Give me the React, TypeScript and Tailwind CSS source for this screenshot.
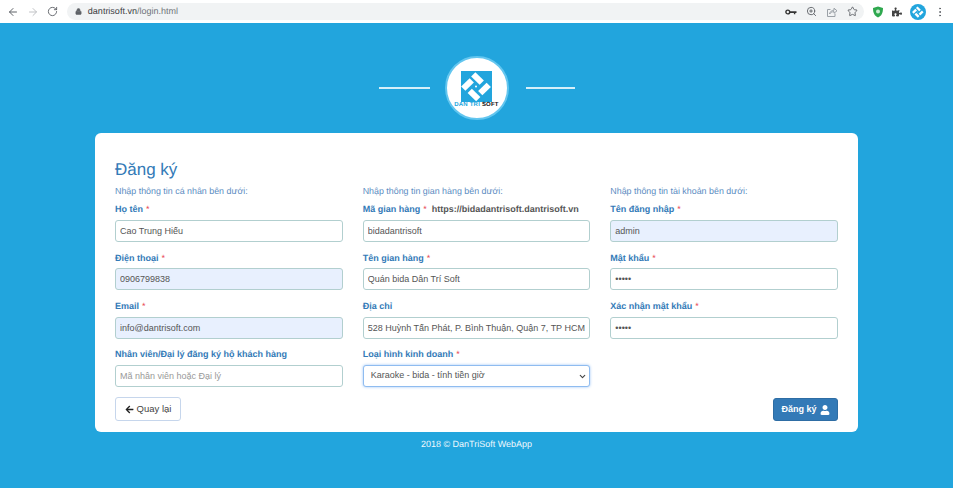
import {
  ArrowLeft,
  ArrowRight,
  ChevronDown,
  EllipsisVertical,
  Lock,
  RotateCw,
  Star,
  ZoomIn,
} from "lucide-react";
import { FaArrowLeft, FaPuzzlePiece, FaUser } from "react-icons/fa";

interface FieldProps {
  label: string;
  required?: boolean;
  value?: string;
  placeholder?: string;
  filled?: boolean;
  type?: string;
  extra?: string;
}

const Pinwheel = ({ size, fill }: { size: number; fill: string }) => (
  <svg width={size} height={size} viewBox="0 0 31 31" className="block">
    <rect x="10.5" y="4.5" width="12" height="6" transform="rotate(45 16.5 7.5)" fill={fill} />
    <rect x="17.5" y="15" width="12" height="6" transform="rotate(-45 23.5 18)" fill={fill} />
    <rect x="7" y="21" width="12" height="6" transform="rotate(45 13 24)" fill={fill} />
    <rect x="0.5" y="10.5" width="12" height="6" transform="rotate(-45 6.5 13.5)" fill={fill} />
    <circle cx="15" cy="15.5" r="1" fill={fill} />
  </svg>
);

const KeyIcon = () => (
  <svg width="12" height="8" viewBox="0 0 12 8" fill="none">
    <circle cx="2.8" cy="4" r="1.9" stroke="#333333" strokeWidth="1.4" />
    <path d="M4.5 3.2H11.5V5H10.3V6.2H8.9V5H4.5Z" fill="#333333" />
  </svg>
);

const ShareIcon = () => (
  <svg width="12" height="12" viewBox="0 0 12 12" fill="none" stroke="#9aa0a6" strokeWidth="1">
    <path d="M4.5 3.5H1.5V10.5H9V7.5" />
    <path d="M3.5 8C4 5.5 6 4.2 8 4.2V2.2L11 4.8L8 7.2V5.6C6.2 5.6 4.8 6.4 3.5 8Z" />
  </svg>
);

const Field = ({ label, required, value, placeholder, filled, type, extra }: FieldProps) => (
  <div className="mb-[9.33px]">
    <label className="mb-[3px] flex h-[14px] items-center whitespace-nowrap text-[9px] font-bold text-[#337ab7]">
      {label}
      {required && <span className="ml-[3px] font-normal text-[#e8424f]">*</span>}
      {extra && <span className="ml-[5px] text-[#555555]">{extra}</span>}
    </label>
    <input
      type={type || "text"}
      defaultValue={value}
      placeholder={placeholder}
      className={`block h-[22px] w-full rounded-[3px] border border-[#b2cfcf] px-[4px] text-[9px] text-[#555555] placeholder:text-[#999999] outline-none ${
        filled ? "bg-[#e8f0fe]" : "bg-white"
      }`}
    />
  </div>
);

const Subtitle = ({ children }: { children: string }) => (
  <p className="mb-[4px] mt-[1px] flex h-[14px] items-center text-[8.9px] text-[#5b8cc2]">
    {children}
  </p>
);

const BrowserBar = () => (
  <div className="flex h-[23px] items-center bg-white pl-[7px] pr-[7px] text-[#5f6368]">
    <div className="flex w-[60px] items-center gap-[8px]">
      <ArrowLeft size={12} />
      <ArrowRight size={12} className="text-[#c0c2c5]" />
      <RotateCw size={11} />
    </div>
    <div className="flex h-[17px] w-[799px] items-center rounded-full bg-[#f1f3f4] pl-[8px] pr-[6px]">
      <Lock size={7} fill="currentColor" className="text-[#5f6368]" />
      <span className="ml-[6px] grow text-[9px] text-[#70757a]">
        <span className="text-[#3c4043]">dantrisoft.vn</span>/login.html
      </span>
      <div className="flex items-center gap-[9px] text-[#5f6368]">
        <KeyIcon />
        <ZoomIn size={11} />
        <ShareIcon />
        <Star size={11} />
      </div>
    </div>
    <div className="ml-[8px] flex items-center gap-[8px]">
      <svg width="12" height="12" viewBox="0 0 12 12">
        <path d="M6 0.5 L11 2 C11 7 9.5 10 6 11.5 C2.5 10 1 7 1 2 Z" fill="#2fa84f" />
        <circle cx="6" cy="5.5" r="2" fill="#cdeed5" />
      </svg>
      <FaPuzzlePiece size={10} className="text-[#444444]" />
      <div className="flex h-[16px] w-[16px] items-center justify-center rounded-full bg-[#22a5dd]">
        <Pinwheel size={12} fill="#ffffff" />
      </div>
      <EllipsisVertical size={12} />
    </div>
  </div>
);

const Logo = () => (
  <div className="flex h-[64px] items-center justify-center">
    <div className="mr-[15px] h-[2px] w-[51px] bg-[#d6eff9]" />
    <div className="flex h-[64px] w-[64px] flex-col items-center rounded-full border-2 border-[#63c6ef] bg-white pt-[13px]">
      <div className="bg-[#22a5dd]">
        <Pinwheel size={31} fill="#ffffff" />
      </div>
      <div className="whitespace-nowrap text-[6px] leading-[7px] font-bold tracking-[0.2px] text-[#22a5dd]">
        DAN TRI <span className="text-[#111111]">SOFT</span>
      </div>
    </div>
    <div className="ml-[17px] h-[2px] w-[49px] bg-[#d6eff9]" />
  </div>
);

export default function App() {
  return (
    <div className="flex h-[488px] flex-col overflow-hidden bg-[#22a5dd] font-['Liberation_Sans',sans-serif] [text-rendering:geometricPrecision]">
      <BrowserBar />
      <div className="pt-[33px]">
        <Logo />
      </div>
      <div className="mx-auto mt-[13px] h-[299px] w-[763px] rounded-[6px] bg-white px-[20px] pt-[25px]">
        <h2 className="h-[24px] text-[17px] leading-[24px] text-[#337ab7]">Đăng ký</h2>
        <div className="mt-[2px] grid grid-cols-3 gap-x-[20px]">
          <div>
            <Subtitle>Nhập thông tin cá nhân bên dưới:</Subtitle>
            <Field label="Họ tên" required value="Cao Trung Hiếu" />
            <Field label="Điện thoại" required value="0906799838" filled />
            <Field label="Email" required value="info@dantrisoft.com" filled />
            <Field label="Nhân viên/Đại lý đăng ký hộ khách hàng" placeholder="Mã nhân viên hoặc Đại lý" />
          </div>
          <div>
            <Subtitle>Nhập thông tin gian hàng bên dưới:</Subtitle>
            <Field label="Mã gian hàng" required value="bidadantrisoft" extra="https://bidadantrisoft.dantrisoft.vn" />
            <Field label="Tên gian hàng" required value="Quán bida Dân Trí Soft" />
            <Field label="Địa chỉ" value="528 Huỳnh Tấn Phát, P. Bình Thuận, Quận 7, TP HCM" />
            <div>
              <label className="mb-[3px] flex h-[14px] items-center text-[9px] font-bold text-[#337ab7]">
                Loại hình kinh doanh
                <span className="ml-[3px] font-normal text-[#e8424f]">*</span>
              </label>
              <div className="relative">
                <select
                  defaultValue="karaoke"
                  className="block h-[22px] w-full appearance-none rounded-[3px] border border-[#8fbcf0] bg-white pl-[7px] text-[9px] text-[#555555] shadow-[0_0_3px_#9cc4f5] outline-none"
                >
                  <option value="karaoke">Karaoke - bida - tính tiền giờ</option>
                </select>
                <ChevronDown
                  size={9}
                  strokeWidth={3}
                  className="pointer-events-none absolute right-[3px] top-[7px] text-[#444444]"
                />
              </div>
            </div>
          </div>
          <div>
            <Subtitle>Nhập thông tin tài khoản bên dưới:</Subtitle>
            <Field label="Tên đăng nhập" required value="admin" filled />
            <Field label="Mật khẩu" required value="12345" type="password" />
            <Field label="Xác nhận mật khẩu" required value="12345" type="password" />
          </div>
        </div>
        <div className="mt-[1px] flex items-end justify-between">
          <button className="flex h-[24px] w-[66px] items-center justify-center gap-[3px] rounded-[3px] border border-[#c6d6ec] bg-white text-[9.5px] text-[#444444]">
            <FaArrowLeft size={9} className="text-[#222222]" />
            Quay lại
          </button>
          <button className="flex h-[23px] w-[65px] items-center justify-center gap-[3px] rounded-[3px] border border-[#2e6da4] bg-[#337ab7] text-[9px] font-bold text-white">
            Đăng ký
            <FaUser size={10} />
          </button>
        </div>
      </div>
      <p className="mt-[6px] text-center text-[9px] leading-[12px] text-[#f0f9fd]">
        2018 © DanTriSoft WebApp
      </p>
    </div>
  );
}
